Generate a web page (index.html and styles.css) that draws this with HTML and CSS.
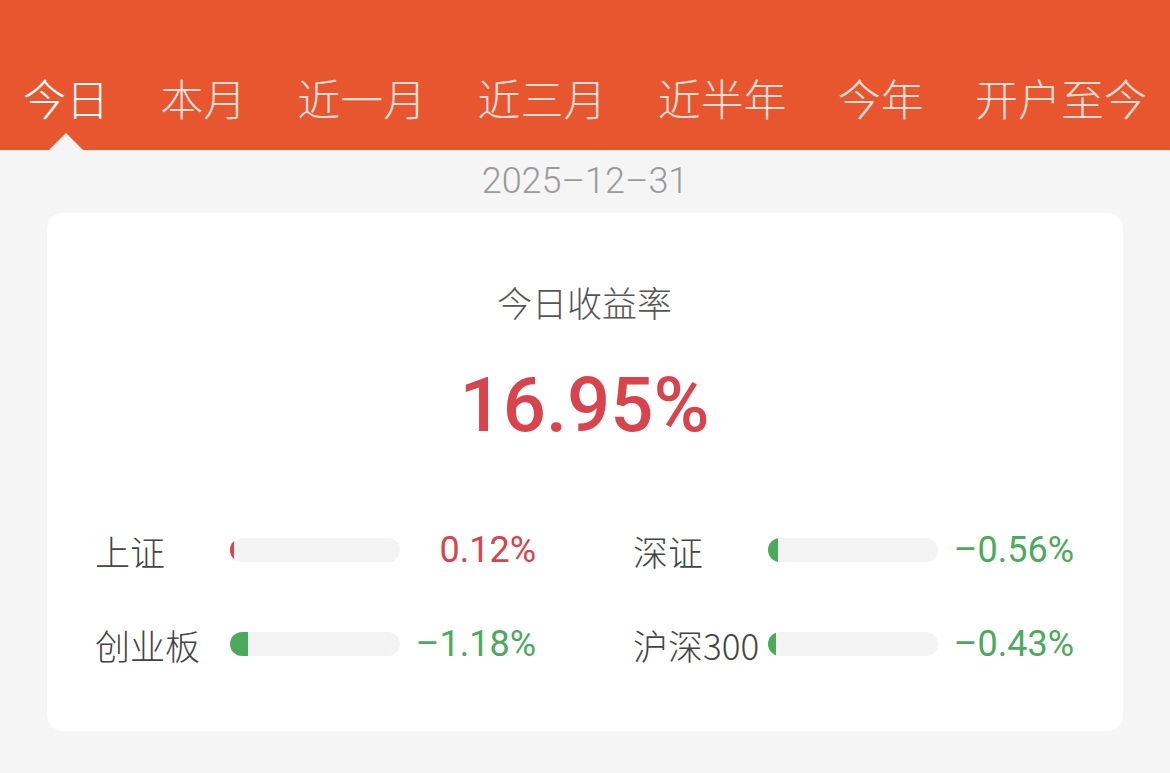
FILE: index.html
```html
<!DOCTYPE html>
<html lang="zh-CN">

<head>
    <meta charset="UTF-8">
    <meta name="viewport" content="width=device-width, initial-scale=1.0">
    <title>收益率</title>
    <link rel="stylesheet" href="styles.css">
</head>

<body>

    <div class="tabs">
        <span class="tab active">今日</span>
        <span class="tab">本月</span>
        <span class="tab">近一月</span>
        <span class="tab">近三月</span>
        <span class="tab">近半年</span>
        <span class="tab">今年</span>
        <span class="tab">开户至今</span>
    </div>

    <div class="date">2025–12–31</div>

    <div class="card">
        <div class="card-title">今日收益率</div>
        <div class="rate">16.95%</div>

        <div class="index-grid">
            <div class="index-row">
                <span class="index-name">上证</span>
                <div class="bar"><div class="bar-fill up" style="width: 4px;"></div></div>
                <span class="index-value up">0.12%</span>
            </div>
            <div class="index-row">
                <span class="index-name">深证</span>
                <div class="bar"><div class="bar-fill down" style="width: 10px;"></div></div>
                <span class="index-value down">–0.56%</span>
            </div>
            <div class="index-row">
                <span class="index-name">创业板</span>
                <div class="bar"><div class="bar-fill down" style="width: 18px;"></div></div>
                <span class="index-value down">–1.18%</span>
            </div>
            <div class="index-row">
                <span class="index-name">沪深300</span>
                <div class="bar"><div class="bar-fill down" style="width: 8px;"></div></div>
                <span class="index-value down">–0.43%</span>
            </div>
        </div>
    </div>

</body>

</html>
```

FILE: styles.css
```css
body {
    margin: 0;
    background: #f5f5f5;
    font-family: 'Noto Sans CJK SC', 'Noto Sans', sans-serif;
    color: #444;
}

.tabs {
    height: 150px;
    box-sizing: border-box;
    padding: 44px 23px 0;
    background: #e8562f;
    display: flex;
    justify-content: space-between;
    align-items: center;
}

.tab {
    position: relative;
    font-size: 43px;
    font-weight: 300;
    line-height: 60px;
    color: rgba(255, 255, 255, 0.84);
}

.tab.active {
    color: #fff;
}

/* little pointer under the selected tab */
.tab.active::after {
    content: '';
    position: absolute;
    left: 50%;
    bottom: -23px;
    margin-left: -17px;
    border-left: 17px solid transparent;
    border-right: 17px solid transparent;
    border-bottom: 17px solid #f5f5f5;
}

.date {
    margin: 11px 0 12px;
    text-align: center;
    font-family: 'Roboto', sans-serif;
    font-weight: 300;
    font-size: 36px;
    line-height: 40px;
    color: #9a9a9a;
}

.card {
    margin: 0 47px;
    padding: 67px 49px 63px 48px;
    background: #fff;
    border-radius: 16px;
}

.card-title {
    text-align: center;
    font-size: 35px;
    font-weight: 300;
    line-height: 44px;
    color: #555;
}

.rate {
    margin-top: 36px;
    text-align: center;
    font-family: 'Roboto', sans-serif;
    font-weight: 500;
    font-size: 76px;
    line-height: 90px;
    color: #d9434b;
}

.index-grid {
    margin-top: 76px;
    display: grid;
    grid-template-columns: 1fr 1fr;
    column-gap: 97px;
    row-gap: 46px;
}

.index-row {
    display: flex;
    align-items: center;
    height: 48px;
}

.index-name {
    width: 135px;
    flex-shrink: 0;
    font-size: 35px;
    font-weight: 300;
    white-space: nowrap;
    color: #444;
}

.bar {
    width: 170px;
    height: 24px;
    border-radius: 12px;
    background: #f3f3f3;
    overflow: hidden;
}

.bar-fill {
    height: 100%;
}

.bar-fill.up {
    background: #d9434b;
}

.bar-fill.down {
    background: #4caa5c;
}

.index-value {
    flex: 1;
    text-align: right;
    font-family: 'Roboto', sans-serif;
    font-size: 36px;
}

.index-value.up {
    color: #d9434b;
}

.index-value.down {
    color: #4caa5c;
}
```
